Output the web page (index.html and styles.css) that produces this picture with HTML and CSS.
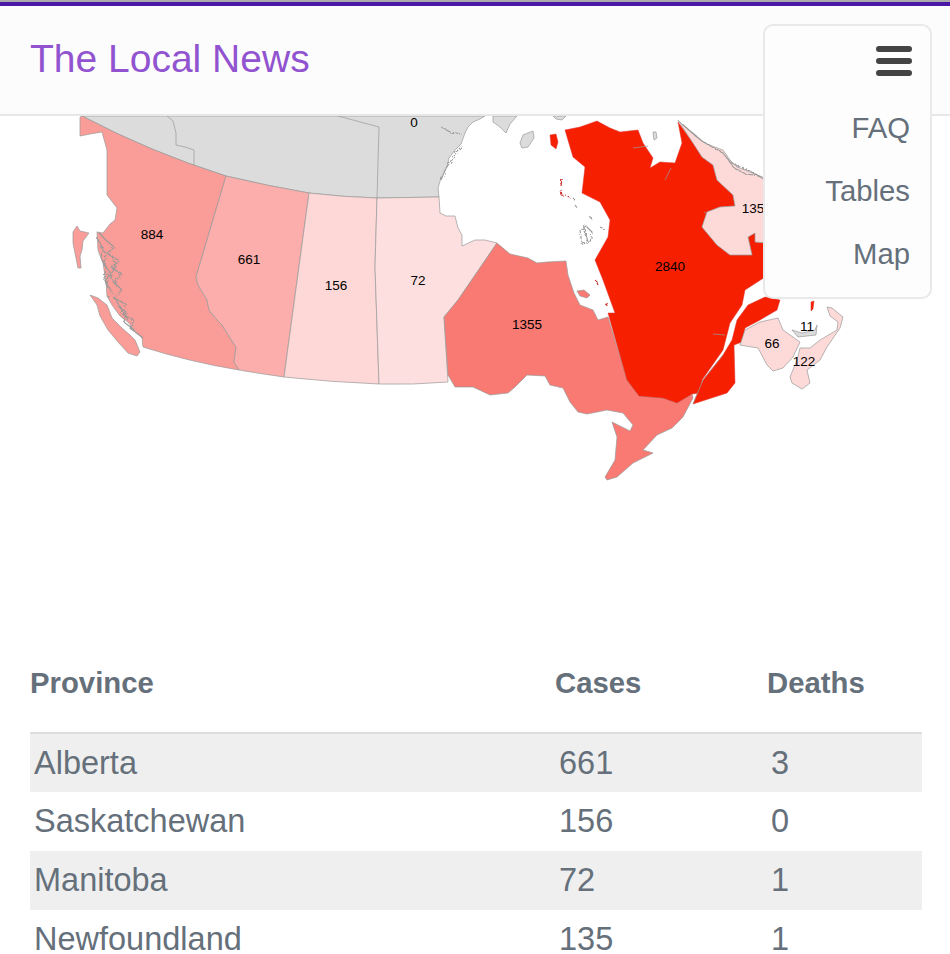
FILE: index.html
```html
<!DOCTYPE html>
<html>
<head>
<meta charset="UTF-8">
<meta name="viewport" content="width=device-width, initial-scale=1.0">
<title>The Local News</title>
<link rel="stylesheet" href="styles.css">
</head>
<body>
	<header class="topbar">
		<a class="brand" href="#">The Local News</a>
	</header>
	<nav class="menu">
		<div class="burger"><span></span><span></span><span></span></div>
		<a href="#faq">FAQ</a>
		<a href="#tables">Tables</a>
		<a href="#map">Map</a>
	</nav>

	<svg class="map" viewBox="0 116 950 519" width="950" height="519">
		<defs>
			<filter id="rough" x="-10%" y="-10%" width="120%" height="120%">
				<feTurbulence type="fractalNoise" baseFrequency="0.45" numOctaves="2" seed="4"/>
				<feDisplacementMap in="SourceGraphic" scale="5"/>
			</filter>
		</defs>

		<!-- territories -->
		<path class="none" d="M82 116 Q150 152 226 176 Q268 186 309 193 Q343 197 377 198 L439 197 L438 188 L441 178 L447 167 L449 158 L455 150 L461 144 L465 133 L468 127 L473 122 L480 119 L485 116 Z"/>
		<path class="line" d="M167 116 L173 121 L176 133 L176 145 L185 147 L194 150 L194 166 M338 116 L379 127 L377 198"/>
		<path class="none" d="M493 116 L517 116 L510 124 L506 133 L500 127 L493 122 Z M520 143 L523 135 L533 131 L534 138 L528 147 L522 148 Z M553 116 L566 116 L562 120 L556 119 Z M653 132 L656 132 L657 138 L654 140 Z"/>

		<!-- west -->
		<path class="bc" d="M80 117 L82 116 Q150 152 226 176 L196 277 L198 285 L207 300 L209 310 L217 320 L222 325 L230 338 L236 347 L234 362 L239 370 Q190 362 143 347 L142 338 L134 330 L128 322 L120 316 L112 305 L107 296 L106 283 L103 263 L98 250 L97 232 L103 233 L110 224 L115 220 L117 208 L107 195 L107 183 L107 150 L102 132 L90 134 L80 136 Z"/>
		<path class="bc" d="M90 295 L98 298 L107 305 L112 318 L122 328 L130 335 L135 340 L140 352 L137 356 L128 353 L118 342 L108 330 L100 316 L97 305 Z"/>
		<path class="bc" d="M77 226 L80 231 L89 233 L83 241 L82 250 L80 256 L81 268 L78 268 L76 258 L73 243 L73 232 Z"/>
		<path class="ab" d="M226 176 Q268 186 309 193 L284 377 Q262 374 239 370 L234 362 L236 347 L230 338 L222 325 L217 320 L209 310 L207 300 L198 285 L196 277 Z"/>
		<path class="sk" d="M309 193 Q343 197 377 198 L375 267 L379 384 Q330 382 284 377 Z"/>
		<path class="mb" d="M377 198 L439 197 L440 213 L446 216 L455 216 L458 228 L462 235 L462 246 L475 240 L485 240 L497 243 L458 300 L444 317 L448 382 Q412 385 379 384 L375 267 Z"/>

		<!-- centre -->
		<path class="on" d="M497 243 L510 254 L528 258 L537 263 L547 262 L566 261 L568 275 L574 293 L580 305 L593 310 L598 320 L608 317 L627 380 L639 396 L663 398 L677 403 L692 394 L693 398 L683 417 L672 428 L657 435 L643 450 L653 453 L633 463 L617 477 L607 480 L605 477 L615 460 L617 437 L612 422 L630 431 L633 425 L623 413 L607 410 L587 414 L578 412 L570 402 L563 388 L550 385 L545 376 L527 375 L515 387 L508 393 L490 395 L473 387 L455 387 L448 375 L444 317 L458 300 Z"/>
		<path class="on" d="M577 291 L584 290 L590 295 L587 298 L580 296 Z"/>
		<path class="qc" d="M565 130 L580 127 L597 121 L610 128 L620 132 L638 130 L643 143 L653 158 L650 168 L660 162 L675 163 L682 143 L678 122 L693 143 L702 157 L713 165 L717 180 L733 195 L735 206 L720 207 L707 212 L702 227 L717 245 L730 255 L752 255 L748 237 L755 233 L755 242 L765 243 L765 277 L745 290 L742 305 L730 323 L723 350 L702 380 L700 393 L692 394 L677 403 L663 398 L639 396 L627 380 L608 313 L615 313 L603 280 L595 260 L608 237 L610 220 L600 202 L582 193 L585 167 L573 157 Z"/>
		<path class="qc" d="M765 297 L780 300 L777 310 L760 320 L745 328 L742 342 L734 345 L735 383 L727 393 L693 404 L703 380 L723 355 L732 340 L737 320 L748 305 Z"/>
		<path class="qc" d="M550 135 L556 134 L558 142 L556 149 L551 145 Z M811 302 L814 301 L813 309 L811 311 Z"/>
		<path class="line" d="M693 404 L703 380 L723 355 M713 334 L725 335 M633 148 L648 146 M665 180 L671 168 M704 212 L714 218"/>

		<!-- east -->
		<path class="nl" d="M678 120 L683 125 L695 136 L703 142 L712 146 L723 150 L730 160 L737 167 L750 172 L765 178 L790 190 L790 245 L755 242 L755 233 L748 237 L752 255 L730 255 L717 245 L702 227 L707 212 L720 207 L735 206 L733 195 L717 180 L713 165 L702 157 L693 143 Z"/>
		<path class="nb" d="M745 330 L760 322 L778 318 L783 330 L800 342 L793 357 L783 368 L773 371 L767 365 L758 348 L740 345 Z"/>
		<path class="ns" d="M790 377 L797 360 L800 348 L810 348 L820 340 L837 330 L838 322 L830 316 L827 307 L832 308 L843 317 L840 328 L827 347 L820 360 L807 370 L810 383 L802 389 L792 383 Z"/>
		<path class="none" d="M792 330 L802 333 L815 330 L817 325 L816 335 L798 337 Z"/>

		<!-- fjords, coast and little islands -->
		<g filter="url(#rough)">
			<path class="coast" d="M98 232 L106 240 L114 247 L108 254 L118 260 L112 268 L122 274 L114 282 L122 290 L114 298 L126 304 L122 314 L134 320 L130 328 L143 338"/>
			<path class="coast" d="M100 246 L106 254 L104 264 L110 272 L106 282 L112 292 L108 298 M116 300 L122 310 L128 320"/>
			<path class="coast" d="M97 238 L103 248 L101 258 L106 268 L104 278 L108 288 M112 256 L116 266 L110 276 L116 286 M118 306 L126 312 L124 322 L134 330"/>
			<path class="coast" d="M441 127 L450 132 L462 134 M441 180 L446 168 L452 160 L456 152 L462 146"/>
			<path class="coast" d="M682 124 L702 141 L712 147 L722 152 L730 162 L740 167 L750 171 L762 178"/>
			<path class="coast" d="M726 156 L734 168 L746 174 L760 176"/>
			<path class="coast" d="M580 230 L586 226 L592 232 L590 242 L582 244 Z M584 228 L588 242"/>
			<path class="coast" d="M600 227 L604 229 M590 216 L592 220 M575 205 L577 208 M573 198 L575 200"/>
			<path class="red" d="M562 178 L561 186 M561 190 L562 196 M566 196 L570 197 M596 280 L598 285 M606 302 L607 306"/>
		</g>

		<text x="414" y="127">0</text>
		<text x="152" y="239">884</text>
		<text x="249" y="264">661</text>
		<text x="336" y="290">156</text>
		<text x="418" y="285">72</text>
		<text x="527" y="329">1355</text>
		<text x="670" y="271">2840</text>
		<text x="753" y="213">135</text>
		<text x="772" y="348">66</text>
		<text x="807" y="331">11</text>
		<text x="804" y="366">122</text>
	</svg>

	<table class="cases">
		<thead>
			<tr><th class="col-name">Province</th><th class="col-cases">Cases</th><th>Deaths</th></tr>
		</thead>
		<tbody>
			<tr><td>Alberta</td><td>661</td><td>3</td></tr>
			<tr><td>Saskatchewan</td><td>156</td><td>0</td></tr>
			<tr><td>Manitoba</td><td>72</td><td>1</td></tr>
			<tr><td>Newfoundland</td><td>135</td><td>1</td></tr>
		</tbody>
	</table>
</body>
</html>
```
FILE: styles.css
```css
html, body {margin:0;padding:0;height:954px;overflow:hidden;background:#fff;}
body {font-family:"Liberation Sans",Arial,sans-serif;color:#65707b;}
a {text-decoration:none;color:inherit;}

.topbar {position:relative;z-index:1;box-sizing:border-box;height:116px;padding:0 30px;display:flex;align-items:center;background:#fcfcfc;border-top:2px solid #aaa;border-bottom:2px solid #e7e7e7;box-shadow:inset 0 4px 0 #4a17a6;}
.brand {font-size:39px;color:#9153cf;padding-top:2px;}

.menu {position:absolute;z-index:2;top:24px;left:763px;box-sizing:border-box;width:169px;height:275px;padding:20px 20px 0 0;display:flex;flex-direction:column;align-items:flex-end;background:#fdfdfd;border:2px solid #e9e9e9;border-radius:10px;}
.menu a {font-size:29.3px;line-height:63px;}
.burger {display:flex;flex-direction:column;gap:6px;margin:0 -2px 20px 0;}
.burger span {display:block;width:36px;height:6px;border-radius:3px;background:#444;}

.map {display:block;}
.map path {stroke:#999;stroke-width:.7;}
.map .line {fill:none;}
.map .coast {fill:none;stroke:#999;stroke-width:1.1;}
.map .red {fill:none;stroke:#c33;stroke-width:1.2;}
.map .qc {stroke:#d33;stroke-width:.5;}
.map text {font-size:13.5px;fill:#000;text-anchor:middle;}
.none {fill:#dcdcdc;}
.bc {fill:#fa9c97;}
.ab {fill:#fbaeab;}
.sk {fill:#fdd8d6;}
.mb {fill:#fedfdf;}
.on {fill:#f87a73;}
.qc {fill:#f62000;}
.nl, .nb, .ns {fill:#fdd9d8;}

.cases {margin-left:30px;width:892px;border-collapse:collapse;table-layout:fixed;}
.cases th {height:98px;padding:0 0 2px;box-sizing:border-box;text-align:left;font-size:29.3px;border-bottom:2px solid #ddd;}
.cases td {height:59px;padding:0 0 0 4px;box-sizing:border-box;font-size:32.5px;}
.cases tbody tr:nth-child(odd) {background:#efefef;}
.col-name {width:525px;}
.col-cases {width:212px;}
```
